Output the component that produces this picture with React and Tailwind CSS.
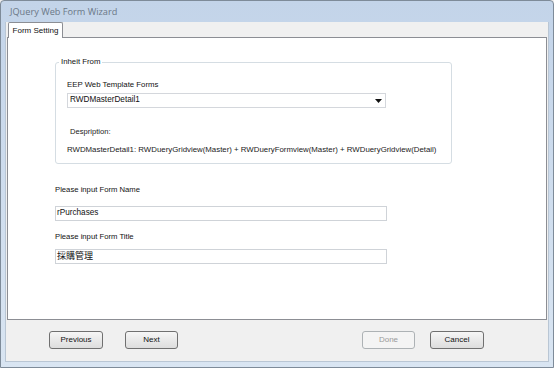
export default function App() {
  const font = { fontFamily: '"Liberation Sans", "Noto Sans CJK TC", sans-serif' };
  const btn =
    "h-[18px] rounded-[3px] border border-[#707070] bg-gradient-to-b from-[#f6f6f6] to-[#dddddd] text-[8px] text-[#111] flex items-center justify-center";
  return (
    <div className="w-[554px] h-[368px] bg-[#f0f0f0] overflow-hidden" style={font}>
      <div className="w-[554px] h-[368px] flex flex-col border border-[#7e8b99] rounded-t-[4px] bg-gradient-to-b from-[#c3d4e9] to-[#d9e5f2]">
        {/* title bar */}
        <div className="h-[21px] flex items-center pl-[9px] text-[9.2px] text-[#6a7786]" style={{ fontFamily: '"Open Sans", "Liberation Sans", sans-serif' }}>
          JQuery Web Form Wizard
        </div>
        {/* body */}
        <div className="flex-1 mx-[4px] mb-[5px] bg-[#f0f0f0] flex flex-col border-l border-r border-b border-[#b9c6d4]">
          {/* tab strip */}
          <div className="h-[15px] flex items-end pl-[2px] bg-[#f0f0f0]">
            <div className="relative z-10 -mb-px h-[16px] w-[55px] bg-white border border-b-0 border-[#8c8e94] flex items-center justify-center text-[8px] text-[#111] rounded-t-[2px]">
              Form Setting
            </div>
          </div>
          {/* panel */}
          <div className="mx-[1px] h-[283px] bg-white border border-[#8c8e94] pl-[47px] pt-[19px]">
            <fieldset className="min-w-0 w-[397px] border border-[#d5dde3] rounded-[3px] px-[11px] pb-[8px]">
              <legend className="-ml-[8px] px-[2px] text-[7.8px] leading-[10px] text-[#111]">Inheit From</legend>
              <div className="mt-[13px] text-[7.8px] leading-[10px] text-[#111]">EEP Web Template Forms</div>
              <div className="mt-[3px] h-[15px] w-[319px] border border-[#d4d7dc] bg-white flex items-center justify-between pl-[2px] pr-[3px] text-[8.2px] text-[#111]">
                <span>RWDMasterDetail1</span>
                <svg width="7" height="4" viewBox="0 0 7 4"><path d="M0 0 L7 0 L3.5 4 Z" fill="#111" /></svg>
              </div>
              <div className="mt-[19px] pl-[3px] text-[7.6px] leading-[10px] text-[#222]">Despription:</div>
              <div className="mt-[8px] text-[7.85px] leading-[10px] text-[#222] whitespace-nowrap">
                RWDMasterDetail1: RWDueryGridview(Master) + RWDueryFormview(Master) + RWDueryGridview(Detail)
              </div>
            </fieldset>
            <div className="mt-[21px] text-[7.7px] leading-[10px] text-[#111]">Please input Form Name</div>
            <div className="mt-[11px] h-[15px] w-[332px] border border-[#cfd3d8] flex items-center pl-[1px] text-[8.2px] text-[#111]">rPurchases</div>
            <div className="mt-[11px] text-[7.7px] leading-[10px] text-[#111]">Please input Form Title</div>
            <div className="mt-[7px] h-[15px] w-[332px] border border-[#cfd3d8] flex items-center pl-[1px] text-[9px] text-[#111]">採購管理</div>
          </div>
          {/* bottom buttons */}
          <div className="flex-1 flex items-start pt-[11px] pl-[43px]">
            <div className={btn + " w-[54px]"}>Previous</div>
            <div className={btn + " w-[53px] ml-[22px]"}>Next</div>
            <div className="ml-[184px] h-[18px] w-[53px] rounded-[3px] border border-[#adb2b5] bg-[#f4f4f4] text-[8px] text-[#9a9a9a] flex items-center justify-center">Done</div>
            <div className={btn + " w-[54px] ml-[15px]"}>Cancel</div>
          </div>
        </div>
      </div>
    </div>
  );
}
